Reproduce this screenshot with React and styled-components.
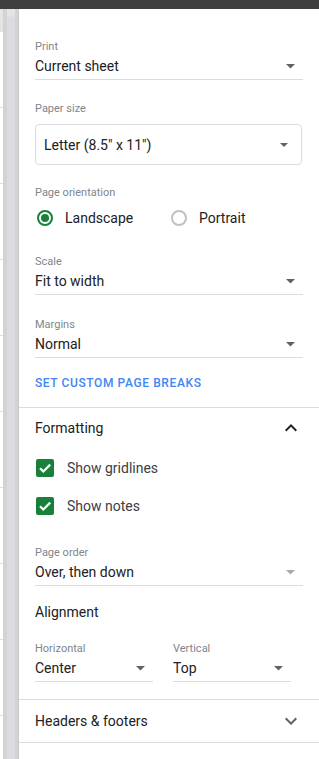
import React from "react";
import styled, { createGlobalStyle } from "styled-components";

const Global = createGlobalStyle`
  html, body { margin: 0; padding: 0; background: #fff; }
  body { font-family: Roboto, "Noto Sans", Arial, sans-serif; -webkit-font-smoothing: antialiased; }
  * { box-sizing: border-box; }
`;

const Page = styled.div`
  width: 319px;
  height: 759px;
  display: flex;
  flex-direction: column;
  overflow: hidden;
`;

const TopBar = styled.div`
  height: 9px;
  flex: none;
  background: #3f3f3f;
`;

const Body = styled.div`
  flex: 1;
  display: flex;
  min-height: 0;
`;

const LeftStrip = styled.div`
  width: 19px;
  flex: none;
  display: flex;
  background: #e4e4e4;
  border-right: 1px solid #c9c9c9;
`;

const SheetEdge = styled.div`
  width: 3px;
  margin-top: 23px;
  background: repeating-linear-gradient(
    to bottom,
    #ffffff 0px,
    #ffffff 75px,
    #e0e0e0 75px,
    #e0e0e0 76px
  );
`;

const Gutter = styled.div`
  width: ${(p) => p.$w}px;
  background: #d3d3d3;
`;

const Track = styled.div`
  width: 8px;
  padding-top: 7px;
  display: flex;
  background: #e4e4e4;
`;

const Thumb = styled.div`
  flex: 1;
  background: #dadce0;
  border-radius: 4px 4px 0 0;
`;

const Panel = styled.div`
  flex: 1;
  display: flex;
  flex-direction: column;
  background: #fff;
`;

const Section = styled.div`
  padding: ${(p) => p.$pt || 0}px 16px ${(p) => p.$pb || 0}px;
  border-bottom: 1px solid #dadce0;
  display: flex;
  flex-direction: column;
`;

const Label = styled.div`
  font-size: 11px;
  line-height: 15px;
  height: 14px;
  color: #80868b;
  margin-top: ${(p) => p.$mt || 0}px;
`;

const Select = styled.div`
  height: 27px;
  display: flex;
  align-items: center;
  justify-content: space-between;
  border-bottom: 1px solid #dadce0;
  font-size: 14px;
  color: #202124;
  padding-right: 8px;
`;

const BoxSelect = styled.div`
  margin-top: 9px;
  margin-right: 1px;
  height: 41px;
  border: 1px solid #dadce0;
  border-radius: 4px;
  display: flex;
  align-items: center;
  justify-content: space-between;
  padding: 0 13px 0 8px;
  font-size: 14px;
  color: #202124;
`;

const RadioRow = styled.div`
  margin-top: 7px;
  height: 24px;
  display: flex;
  align-items: center;
`;

const RadioOption = styled.label`
  display: flex;
  align-items: center;
  width: 134px;
  font-size: 14px;
  color: #202124;
`;

const RadioCircle = styled.span`
  width: 16px;
  height: 16px;
  margin-left: 2px;
  margin-right: 12px;
  border-radius: 50%;
  border: 2px solid ${(p) => (p.$on ? "#188038" : "#bdc1c6")};
  display: flex;
  align-items: center;
  justify-content: center;
  &::after {
    content: "";
    width: 8px;
    height: 8px;
    border-radius: 50%;
    background: ${(p) => (p.$on ? "#188038" : "transparent")};
  }
`;

const LinkButton = styled.div`
  margin-top: 17px;
  font-size: 12px;
  line-height: 16px;
  font-weight: 500;
  letter-spacing: 0.6px;
  color: #4285f4;
`;

const Header = styled.div`
  height: ${(p) => p.$h || 40}px;
  display: flex;
  align-items: center;
  justify-content: space-between;
  font-size: 14px;
  color: #202124;
`;

const CheckRow = styled.div`
  margin-top: ${(p) => p.$mt}px;
  height: 24px;
  display: flex;
  align-items: center;
  font-size: 14px;
  color: #3c4043;
`;

const CheckBox = styled.span`
  width: 18px;
  height: 18px;
  margin-left: 1px;
  margin-right: 13px;
  border-radius: 2px;
  background: #188038;
  display: flex;
  align-items: center;
  justify-content: center;
`;

const SubHeading = styled.div`
  margin-top: 16px;
  font-size: 14px;
  line-height: 20px;
  color: #202124;
`;

const Columns = styled.div`
  display: grid;
  grid-template-columns: 118px 118px;
  column-gap: 20px;
`;

const Fill = styled.div`
  flex: 1;
`;

const Arrow = ({ disabled }) => (
  <svg width="9" height="5" viewBox="0 0 9 5">
    <path d="M0 0h9L4.5 4.5z" fill={disabled ? "#a6aab0" : "#5f6368"} />
  </svg>
);

const Chevron = ({ up, color }) => (
  <svg width="24" height="24" viewBox="0 0 24 24">
    <path
      d={
        up
          ? "M12 8l-6 6 1.41 1.41L12 10.83l4.59 4.58L18 14z"
          : "M16.59 8.59L12 13.17 7.41 8.59 6 10l6 6 6-6z"
      }
      fill={color}
    />
  </svg>
);

const Check = () => (
  <svg width="18" height="18" viewBox="0 0 18 18">
    <path
      d="M4 9.2l3.3 3.3L14.2 5.6"
      fill="none"
      stroke="#fff"
      strokeWidth="2.2"
    />
  </svg>
);

const Field = ({ label, value, mt, disabled }) => (
  <>
    <Label $mt={mt}>{label}</Label>
    <Select>
      <span>{value}</span>
      <Arrow disabled={disabled} />
    </Select>
  </>
);

export default function App() {
  return (
    <>
      <Global />
      <Page>
        <TopBar />
        <Body>
          <LeftStrip>
            <SheetEdge />
            <Gutter $w={4} />
            <Track>
              <Thumb />
            </Track>
            <Gutter $w={3} />
          </LeftStrip>
          <Panel>
            <Section $pt={30} $pb={16}>
              <Field label="Print" value="Current sheet" />
              <Label $mt={21}>Paper size</Label>
              <BoxSelect>
                <span>Letter (8.5" x 11")</span>
                <svg width="8" height="4" viewBox="0 0 8 4">
                  <path d="M0 0h8L4 4z" fill="#5f6368" />
                </svg>
              </BoxSelect>
              <Label $mt={20}>Page orientation</Label>
              <RadioRow>
                <RadioOption>
                  <RadioCircle $on />
                  Landscape
                </RadioOption>
                <RadioOption>
                  <RadioCircle />
                  Portrait
                </RadioOption>
              </RadioRow>
              <Field label="Scale" value="Fit to width" mt={24} />
              <Field label="Margins" value="Normal" mt={22} />
              <LinkButton>SET CUSTOM PAGE BREAKS</LinkButton>
            </Section>
            <Section $pb={17}>
              <Header>
                <span>Formatting</span>
                <Chevron up color="#202124" />
              </Header>
              <CheckRow $mt={8}>
                <CheckBox>
                  <Check />
                </CheckBox>
                Show gridlines
              </CheckRow>
              <CheckRow $mt={14}>
                <CheckBox>
                  <Check />
                </CheckBox>
                Show notes
              </CheckRow>
              <Field label="Page order" value="Over, then down" mt={27} disabled />
              <SubHeading>Alignment</SubHeading>
              <Columns>
                <div>
                  <Field label="Horizontal" value="Center" mt={19} />
                </div>
                <div>
                  <Field label="Vertical" value="Top" mt={19} />
                </div>
              </Columns>
            </Section>
            <Section>
              <Header $h={42}>
                <span>Headers &amp; footers</span>
                <Chevron color="#5f6368" />
              </Header>
            </Section>
            <Fill />
          </Panel>
        </Body>
      </Page>
    </>
  );
}
